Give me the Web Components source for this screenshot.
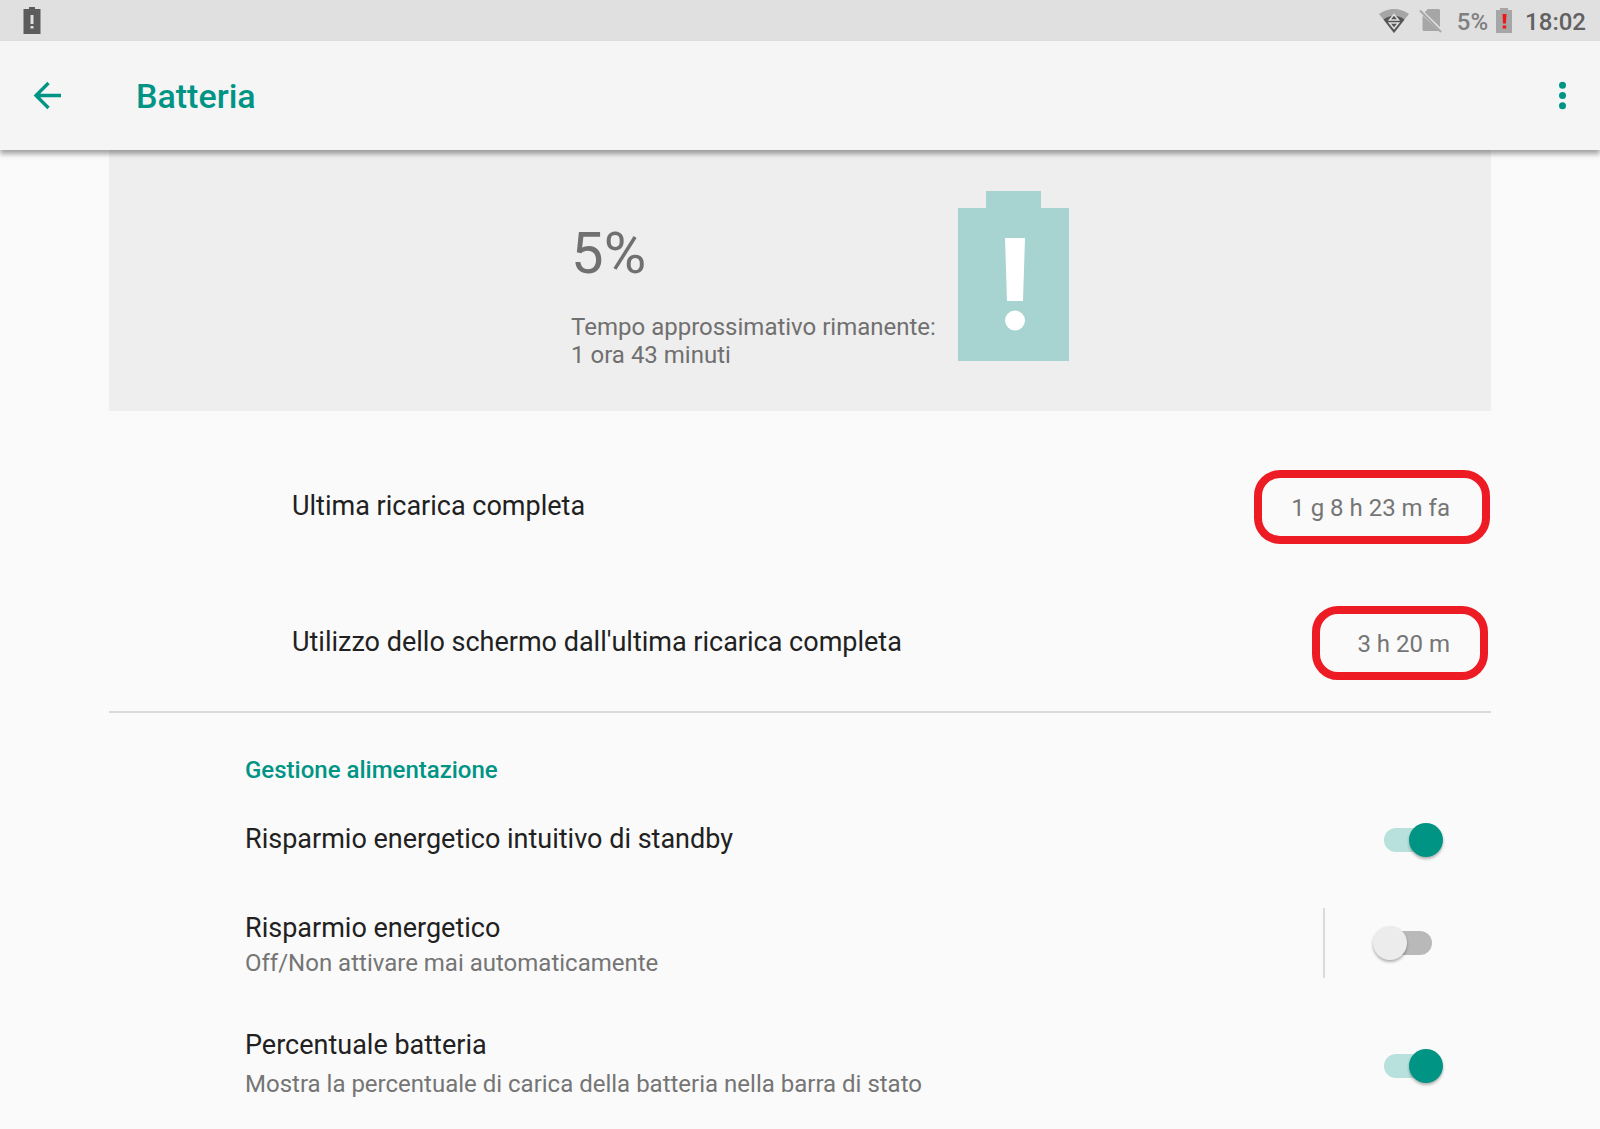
<!DOCTYPE html>
<html lang="it">
<head>
  <meta charset="UTF-8">
  <meta name="viewport" content="width=device-width, initial-scale=1.0">
  <title>Batteria</title>
  <style>
    :root {
      --accent: #009485;
      --text: #212121;
      --text-secondary: #757575;
      --divider: #dadada;
      --gutter: 109px;
    }
    body {
      margin: 0;
      background: #fafafa;
      color: var(--text);
      font-family: Roboto, "Liberation Sans", sans-serif;
      font-size: 27px;
      line-height: 32px;
    }
    main {
      padding: 0 var(--gutter);
    }
  </style>
</head>
<body>
  <status-bar level="5%" time="18:02"></status-bar>
  <app-bar>Batteria</app-bar>
  <main>
    <battery-header>
      <span slot="level">5%</span>
      <span slot="remaining">Tempo approssimativo rimanente:<br>1 ora 43 minuti</span>
    </battery-header>
    <usage-list>
      <usage-row value="1 g 8 h 23 m fa">Ultima ricarica completa</usage-row>
      <usage-row value="3 h 20 m" class="screen">Utilizzo dello schermo dall'ultima ricarica completa</usage-row>
    </usage-list>
    <pref-category>
      <span slot="title">Gestione alimentazione</span>
      <pref-switch checked>Risparmio energetico intuitivo di standby</pref-switch>
      <pref-switch divided summary="Off/Non attivare mai automaticamente">Risparmio energetico</pref-switch>
      <pref-switch checked roomy summary="Mostra la percentuale di carica della batteria nella barra di stato">Percentuale batteria</pref-switch>
    </pref-category>
  </main>

  <template id="status-bar">
    <style>
      :host {
        display: flex;
        align-items: center;
        height: 41px;
        padding: 0 14px 0 23px;
        background: #e0e0e0;
        font-size: 24px;
        font-weight: 500;
        line-height: 28px;
        color: #616161;
      }
      svg { display: block; }
      .end {
        display: flex;
        align-items: center;
        margin-left: auto;
      }
      .sim { margin: 0 15px 0 10px; }
      .battery { margin: 0 13px 0 8px; }
      .level, .time { padding-top: 2px; }
      .level { color: #808080; }
    </style>
    <svg width="18" height="27" viewBox="0 0 18 27">
      <path fill="#5c5c5c" fill-rule="evenodd" d="M6 0h6v2h5.500v25H.5V2H6zM7.500 8v9h3V8zM7.500 19v2.500h3V19z"/>
    </svg>
    <div class="end">
      <svg width="30" height="24" viewBox="0 0 30 24">
        <path fill="#a6a6a6" d="M0 5Q15-5 30 5L15 24z"/>
        <path fill="#555" d="M4.500 10.500Q15 3 25.500 10.500L15 24z"/>
        <path fill="none" stroke="#e0e0e0" stroke-width="1.500" d="M15 5.500L19.500 11h-9zM15 19.500L10.500 14h9z"/>
      </svg>
      <svg class="sim" width="23" height="25" viewBox="0 0 23 25">
        <path fill="#a6a6a6" d="M9 1h10.500q1.500 0 1.500 1.500V19L5.700 4.200zM3.500 7.500L20 23H5q-1.500 0-1.500-1.500z"/>
        <path stroke="#a6a6a6" stroke-width="2" d="M1 2.500L22 24"/>
      </svg>
      <span class="level"></span>
      <svg class="battery" width="16" height="25" viewBox="0 0 16 25">
        <path fill="#a6a6a6" d="M4 0h8v2h4v23H0V2h4z"/>
        <path fill="#f01414" d="M6.500 6h4l-.6 9.500H7.100zM6.700 17.500h3.500v3H6.700z"/>
      </svg>
      <span class="time"></span>
    </div>
  </template>

  <template id="app-bar">
    <style>
      :host {
        position: relative;
        display: flex;
        align-items: center;
        height: 109px;
        padding: 0 20px 0 31px;
        background: #f5f5f5;
        box-shadow: 0 4px 5px rgba(0, 0, 0, .35);
        color: var(--accent);
      }
      h1 {
        flex: 1;
        margin: 0 0 0 71px;
        font-size: 34px;
        font-weight: 500;
        line-height: 40px;
      }
      button {
        padding: 0;
        border: 0;
        background: none;
        color: inherit;
      }
      svg { display: block; }
    </style>
    <button type="button" aria-label="Indietro">
      <svg width="34" height="34" viewBox="0 0 34 34">
        <path fill="none" stroke="currentColor" stroke-width="3.300" d="M30 16.500H6M17.500 4L5 16.500l12.500 12.500"/>
      </svg>
    </button>
    <h1><slot></slot></h1>
    <button type="button" aria-label="Altre opzioni">
      <svg width="34" height="34" viewBox="0 0 34 34">
        <g fill="currentColor"><circle cx="16.500" cy="6.200" r="3.500"/><circle cx="16.500" cy="16.500" r="3.500"/><circle cx="16.500" cy="26.800" r="3.500"/></g>
      </svg>
    </button>
  </template>

  <template id="battery-header">
    <style>
      :host {
        display: flex;
        justify-content: center;
        align-items: flex-start;
        gap: 22px;
        padding: 41px 0 42px 40px;
        background: #eee;
        color: #707070;
      }
      .level {
        margin: 28px 0 26px;
        font-size: 58px;
        line-height: 68px;
      }
      .remaining {
        font-size: 24px;
        line-height: 28px;
      }
      svg { display: block; }
    </style>
    <div>
      <div class="level"><slot name="level"></slot></div>
      <div class="remaining"><slot name="remaining"></slot></div>
    </div>
    <svg width="111" height="170" viewBox="0 0 111 170">
      <path fill="#a7d3d0" d="M28 0h55v17h28v153H0V17h28z"/>
      <path fill="#fff" d="M47 47h20l-2 63H49z"/>
      <circle fill="#fff" cx="57" cy="129.500" r="10"/>
    </svg>
  </template>

  <template id="usage-list">
    <style>
      :host {
        display: block;
        padding-top: 28px;
        border-bottom: 2px solid var(--divider);
      }
    </style>
    <slot></slot>
  </template>

  <template id="usage-row">
    <style>
      :host {
        display: flex;
        justify-content: space-between;
        align-items: center;
        height: 136px;
        padding: 0 1px 0 183px;
      }
      .label { padding-bottom: 2px; }
      .value {
        padding: 16px 32px 14px 29px;
        border: 8px solid #ed1c24;
        border-radius: 26px;
        font-size: 24px;
        line-height: 28px;
        color: var(--text-secondary);
      }
      :host(.screen) { padding-right: 3px; }
      :host(.screen) .value { padding: 16px 30px 14px 37px; }
    </style>
    <span class="label"><slot></slot></span>
    <span class="value"></span>
  </template>

  <template id="pref-category">
    <style>
      :host {
        display: block;
        padding: 43px 48px 0 136px;
      }
      h2 {
        margin: 0 0 12px;
        color: var(--accent);
        font-size: 24px;
        font-weight: 500;
        line-height: 28px;
      }
    </style>
    <h2><slot name="title"></slot></h2>
    <slot></slot>
  </template>

  <template id="pref-switch">
    <style>
      :host { display: block; }
      label {
        display: flex;
        align-items: center;
        justify-content: space-between;
        padding: 27px 0;
      }
      .text {
        display: grid;
        gap: 5px;
        padding-bottom: 2px;
      }
      .summary {
        color: var(--text-secondary);
        font-size: 24px;
        line-height: 28px;
      }
      .widget {
        display: flex;
        align-items: center;
      }
      :host([divided]) label { padding: 24px 0 22px; }
      :host([divided]) .text { padding: 2px 0 0; }
      :host([divided]) .widget {
        height: 70px;
        padding-left: 48px;
        border-left: 2px solid var(--divider);
      }
      :host([roomy]) .text {
        gap: 9px;
        padding-bottom: 4px;
      }
      :host([roomy]) label { padding: 29px 0 26px; }
      input {
        appearance: none;
        display: grid;
        align-items: center;
        width: 70px;
        height: 34px;
        margin: 0;
      }
      input::before, input::after {
        content: "";
        grid-area: 1 / 1;
        border-radius: 17px;
      }
      input::before {
        height: 24px;
        margin: 0 11px;
        background: #b9b9b9;
      }
      input::after {
        width: 34px;
        height: 34px;
        background: #ececec;
        box-shadow: 0 2px 3px rgba(0, 0, 0, .3);
      }
      input:checked::before { background: #b8e0dc; }
      input:checked::after {
        justify-self: end;
        background: var(--accent);
      }
    </style>
    <label>
      <span class="text">
        <span><slot></slot></span>
      </span>
      <span class="widget"><input type="checkbox" role="switch"></span>
    </label>
  </template>

  <script>
    class TemplateElement extends HTMLElement {
      constructor() {
        super()
        const tmpl = document.getElementById(this.localName)
        this.attachShadow({mode: 'open'}).appendChild(tmpl.content.cloneNode(true))
      }
      $(selector) {
        return this.shadowRoot.querySelector(selector)
      }
    }

    class StatusBar extends TemplateElement {
      connectedCallback() {
        this.$('.level').textContent = this.getAttribute('level')
        this.$('.time').textContent = this.getAttribute('time')
      }
    }

    class UsageRow extends TemplateElement {
      connectedCallback() {
        this.$('.value').textContent = this.getAttribute('value')
      }
    }

    class PrefSwitch extends TemplateElement {
      connectedCallback() {
        this.$('input').checked = this.hasAttribute('checked')
        if (this.hasAttribute('summary') && !this.$('.summary')) {
          const summary = document.createElement('span')
          summary.className = 'summary'
          summary.textContent = this.getAttribute('summary')
          this.$('.text').appendChild(summary)
        }
      }
    }

    customElements.define('status-bar', StatusBar)
    customElements.define('app-bar', class extends TemplateElement {})
    customElements.define('battery-header', class extends TemplateElement {})
    customElements.define('usage-list', class extends TemplateElement {})
    customElements.define('usage-row', UsageRow)
    customElements.define('pref-category', class extends TemplateElement {})
    customElements.define('pref-switch', PrefSwitch)
  </script>
</body>
</html>
